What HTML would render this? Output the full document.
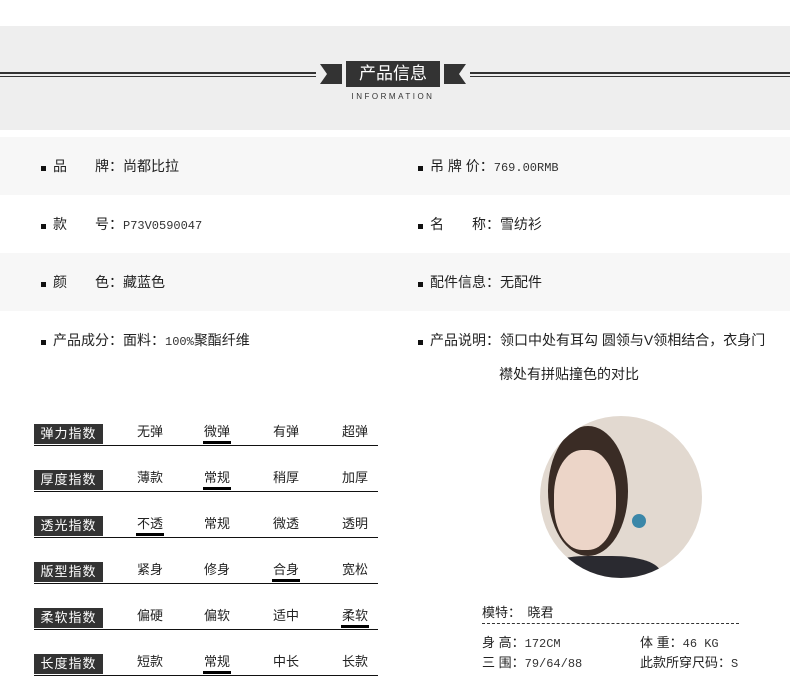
<!DOCTYPE html>
<html><head><meta charset="utf-8"><style>
body{margin:0;width:790px;height:676px;background:#fff;position:relative;overflow:hidden;font-family:"Liberation Sans","Noto Sans CJK SC",sans-serif;font-size:14px;color:#222}
.a{position:absolute}
.hdr{left:0;top:26px;width:790px;height:104px;background:#eeeeee}
.ln{height:2px;background:#333}
.row{left:0;width:790px;height:58px}
.it{position:absolute;font-size:14px;white-space:nowrap}
.it:before{content:"";position:absolute;left:-12px;top:10px;width:5px;height:5px;background:#111}
.mono{font-family:"Liberation Mono","Noto Sans CJK SC",monospace;font-size:12px;color:#333}
.lab{left:34px;width:69px;height:20px;background:#333;color:#fff;font-size:13px;line-height:20px;text-align:center;letter-spacing:1px}
.bl{left:34px;width:344px;height:1px;background:#111}
.opt{width:50px;text-align:center;font-size:13px;line-height:16px}
.ul{width:28px;height:3px;background:#000}
</style></head><body>
<div class="a hdr"></div>
<div class="a ln" style="left:0;top:72px;width:316px"></div>
<div class="a" style="left:0;top:76px;width:316px;height:1px;background:#333"></div>
<div class="a ln" style="left:470px;top:72px;width:320px"></div>
<div class="a" style="left:470px;top:76px;width:320px;height:1px;background:#333"></div>
<svg class="a" style="left:320px;top:61px" width="146" height="26"><polygon points="0,3 22,3 22,23 0,23 7,13" fill="#333"/><polygon points="146,3 124,3 124,23 146,23 139,13" fill="#333"/><rect x="26" y="0" width="94" height="26" fill="#333"/></svg>
<div class="a" style="left:346px;top:61px;width:94px;height:26px;line-height:26px;text-align:center;color:#fff;font-size:17px">产品信息</div>
<div class="a" style="left:340px;top:92px;width:106px;text-align:center;font-size:8px;letter-spacing:2.5px;color:#333">INFORMATION</div>

<div class="a row" style="top:137px;background:#f7f7f7"></div>
<div class="a row" style="top:253px;background:#f7f7f7"></div>

<div class="it" style="left:53px;top:156px">品　　牌：尚都比拉</div>
<div class="it" style="left:430px;top:156px">吊 牌 价：<span class="mono">769.00RMB</span></div>
<div class="it" style="left:53px;top:214px">款　　号：<span class="mono">P73V0590047</span></div>
<div class="it" style="left:430px;top:214px">名　　称：雪纺衫</div>
<div class="it" style="left:53px;top:272px">颜　　色：藏蓝色</div>
<div class="it" style="left:430px;top:272px">配件信息：无配件</div>
<div class="it" style="left:53px;top:330px">产品成分：面料：<span class="mono">100%</span>聚酯纤维</div>
<div class="it" style="left:430px;top:330px">产品说明：领口中处有耳勾 圆领与V领相结合，衣身门</div>
<div class="a" style="left:499px;top:364px;font-size:14px">襟处有拼贴撞色的对比</div>

<div class="a lab" style="top:424px">弹力指数</div><div class="a bl" style="top:445px"></div>
<div class="a opt" style="left:125px;top:424px">无弹</div><div class="a opt" style="left:192px;top:424px">微弹</div><div class="a opt" style="left:261px;top:424px">有弹</div><div class="a opt" style="left:330px;top:424px">超弹</div><div class="a ul" style="left:203px;top:441px"></div>

<div class="a lab" style="top:470px">厚度指数</div><div class="a bl" style="top:491px"></div>
<div class="a opt" style="left:125px;top:470px">薄款</div><div class="a opt" style="left:192px;top:470px">常规</div><div class="a opt" style="left:261px;top:470px">稍厚</div><div class="a opt" style="left:330px;top:470px">加厚</div><div class="a ul" style="left:203px;top:487px"></div>

<div class="a lab" style="top:516px">透光指数</div><div class="a bl" style="top:537px"></div>
<div class="a opt" style="left:125px;top:516px">不透</div><div class="a opt" style="left:192px;top:516px">常规</div><div class="a opt" style="left:261px;top:516px">微透</div><div class="a opt" style="left:330px;top:516px">透明</div><div class="a ul" style="left:136px;top:533px"></div>

<div class="a lab" style="top:562px">版型指数</div><div class="a bl" style="top:583px"></div>
<div class="a opt" style="left:125px;top:562px">紧身</div><div class="a opt" style="left:192px;top:562px">修身</div><div class="a opt" style="left:261px;top:562px">合身</div><div class="a opt" style="left:330px;top:562px">宽松</div><div class="a ul" style="left:272px;top:579px"></div>

<div class="a lab" style="top:608px">柔软指数</div><div class="a bl" style="top:629px"></div>
<div class="a opt" style="left:125px;top:608px">偏硬</div><div class="a opt" style="left:192px;top:608px">偏软</div><div class="a opt" style="left:261px;top:608px">适中</div><div class="a opt" style="left:330px;top:608px">柔软</div><div class="a ul" style="left:341px;top:625px"></div>

<div class="a lab" style="top:654px">长度指数</div><div class="a bl" style="top:675px"></div>
<div class="a opt" style="left:125px;top:654px">短款</div><div class="a opt" style="left:192px;top:654px">常规</div><div class="a opt" style="left:261px;top:654px">中长</div><div class="a opt" style="left:330px;top:654px">长款</div><div class="a ul" style="left:203px;top:671px"></div>

<div class="a" style="left:540px;top:416px;width:162px;height:162px;border-radius:50%;overflow:hidden;background:#e2d9d0">
<div class="a" style="left:8px;top:10px;width:80px;height:130px;border-radius:50%;background:#3a2c25"></div>
<div class="a" style="left:14px;top:34px;width:62px;height:100px;border-radius:45%;background:#ecd5c8"></div>
<div class="a" style="left:0;top:140px;width:120px;height:40px;border-radius:40%;background:#2a2a30"></div>
<div class="a" style="left:92px;top:98px;width:14px;height:14px;border-radius:50%;background:#3b87a8"></div>
</div>

<div class="a" style="left:482px;top:602px;font-size:13px">模特：　晓君</div>
<div class="a" style="left:482px;top:623px;width:257px;border-top:1px dashed #333"></div>
<div class="a" style="left:482px;top:632px;font-size:13px">身 高：<span class="mono">172CM</span></div>
<div class="a" style="left:640px;top:632px;font-size:13px">体 重：<span class="mono">46 KG</span></div>
<div class="a" style="left:482px;top:652px;font-size:13px">三 围：<span class="mono">79/64/88</span></div>
<div class="a" style="left:640px;top:652px;font-size:13px">此款所穿尺码：<span class="mono">S</span></div>
</body></html>
